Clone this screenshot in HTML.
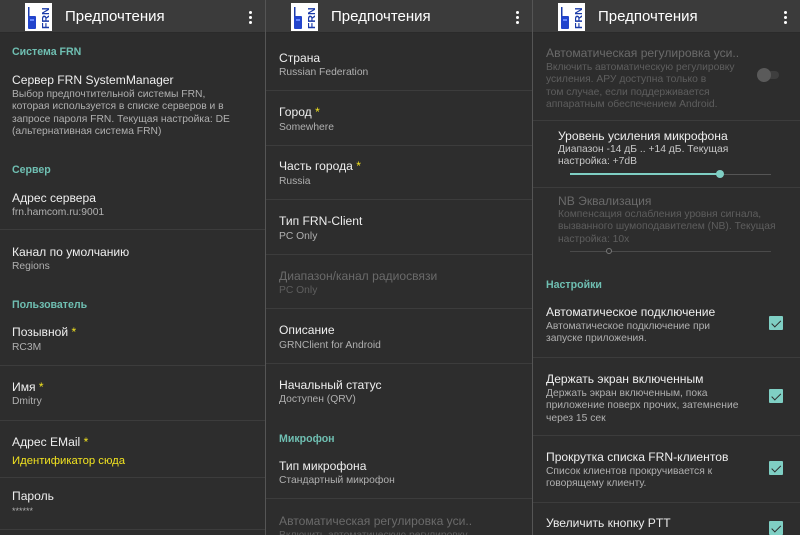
<!DOCTYPE html>
<html><head><meta charset="utf-8"><style>
*{margin:0;padding:0;box-sizing:border-box}
body{width:800px;height:535px;overflow:hidden;background:#2d2d2d;font-family:"Liberation Sans","DejaVu Sans",sans-serif;position:relative}
.p{position:absolute;top:0;height:535px;overflow:hidden;background:#2d2d2d}
.tb{position:absolute;left:0;top:0;right:0;height:33px;background:#3b3b3b;border-bottom:1px solid #2a2a2a}
.tt{position:absolute;left:65px;top:8px;color:#fff;font-size:15px}
.logo{position:absolute;left:25px;top:3px;width:27px;height:28px;background:#fff}
.menu{position:absolute;right:13px;top:11px;width:3px}
.menu i{display:block;width:3px;height:3px;background:#fff;border-radius:50%;margin-bottom:2px}
.t{position:absolute;color:#eee;font-size:12.1px;white-space:nowrap}
.s{position:absolute;color:#b0b0b0;font-size:10.3px;line-height:12.3px;white-space:nowrap}
.h{position:absolute;color:#6fbfb2;font-size:10.6px;font-weight:bold}
.d{color:#6a6a6a!important}
.ds{color:#5e5e5e!important}
.l{position:absolute;left:0;right:0;height:1px;background:#3c3c3c}
.y{color:#f2e320}
.cb{position:absolute;width:14px;height:14px;background:#7fcfc4;border-radius:1px}
.cb:after{content:"";position:absolute;left:4.5px;top:1.5px;width:3.5px;height:7.5px;border:solid #2d2d2d;border-width:0 1.6px 1.6px 0;transform:rotate(45deg)}
</style></head><body>

<!-- Panel 1 -->
<div class="p" style="left:0;width:265px">
<div class="tb"><div class="logo"><svg width="27" height="28" viewBox="0 0 27 28"><rect x="3" y="4" width="1.5" height="10" fill="#1a3aa8"/><rect x="3" y="13" width="8" height="13" rx="1" fill="#2244cc"/><rect x="5" y="16" width="4" height="2" fill="#6688ff"/><text x="0" y="0" transform="translate(24,26) rotate(-90)" font-family="Liberation Sans" font-weight="bold" font-size="10.5" fill="#1a3aa8">FRN</text></svg></div><div class="tt">Предпочтения</div><div class="menu"><i></i><i></i><i></i></div></div>
<div class="h" style="left:12px;top:46px">Система FRN</div>
<div class="t" style="left:12px;top:73px">Сервер FRN SystemManager</div>
<div class="s" style="left:12px;top:89px">Выбор предпочтительной системы FRN,<br>которая используется в списке серверов и в<br>запросе пароля FRN. Текущая настройка: DE<br>(альтернативная система FRN)</div>
<div class="h" style="left:12px;top:164px">Сервер</div>
<div class="t" style="left:12px;top:191px">Адрес сервера</div>
<div class="s" style="left:12px;top:207px">frn.hamcom.ru:9001</div>
<div class="l" style="top:229px"></div>
<div class="t" style="left:12px;top:245px">Канал по умолчанию</div>
<div class="s" style="left:12px;top:261px">Regions</div>
<div class="h" style="left:12px;top:299px">Пользователь</div>
<div class="t" style="left:12px;top:325px">Позывной <span class="y">*</span></div>
<div class="s" style="left:12px;top:342px">RC3M</div>
<div class="l" style="top:365px"></div>
<div class="t" style="left:12px;top:380px">Имя <span class="y">*</span></div>
<div class="s" style="left:12px;top:396px">Dmitry</div>
<div class="l" style="top:420px"></div>
<div class="t" style="left:12px;top:435px">Адрес EMail <span class="y">*</span></div>
<div class="t y" style="left:12px;top:455px;font-size:11.3px">Идентификатор сюда</div>
<div class="l" style="top:477px"></div>
<div class="t" style="left:12px;top:489px">Пароль</div>
<div class="s" style="left:12px;top:505px;font-size:9px">******</div>
<div class="l" style="top:529px"></div>
</div>
<div style="position:absolute;left:265px;top:0;width:1px;height:535px;background:#555"></div>

<!-- Panel 2 -->
<div class="p" style="left:266px;width:266px">
<div class="tb"><div class="logo"><svg width="27" height="28" viewBox="0 0 27 28"><rect x="3" y="4" width="1.5" height="10" fill="#1a3aa8"/><rect x="3" y="13" width="8" height="13" rx="1" fill="#2244cc"/><rect x="5" y="16" width="4" height="2" fill="#6688ff"/><text x="0" y="0" transform="translate(24,26) rotate(-90)" font-family="Liberation Sans" font-weight="bold" font-size="10.5" fill="#1a3aa8">FRN</text></svg></div><div class="tt">Предпочтения</div><div class="menu"><i></i><i></i><i></i></div></div>
<div class="t" style="left:13px;top:51px">Страна</div>
<div class="s" style="left:13px;top:67px">Russian Federation</div>
<div class="l" style="top:90px"></div>
<div class="t" style="left:13px;top:105px">Город <span class="y">*</span></div>
<div class="s" style="left:13px;top:122px">Somewhere</div>
<div class="l" style="top:145px"></div>
<div class="t" style="left:13px;top:159px">Часть города <span class="y">*</span></div>
<div class="s" style="left:13px;top:176px">Russia</div>
<div class="l" style="top:199px"></div>
<div class="t" style="left:13px;top:214px">Тип FRN-Client</div>
<div class="s" style="left:13px;top:231px">PC Only</div>
<div class="l" style="top:254px"></div>
<div class="t d" style="left:13px;top:269px">Диапазон/канал радиосвязи</div>
<div class="s ds" style="left:13px;top:285px">PC Only</div>
<div class="l" style="top:308px"></div>
<div class="t" style="left:13px;top:323px">Описание</div>
<div class="s" style="left:13px;top:340px">GRNClient for Android</div>
<div class="l" style="top:363px"></div>
<div class="t" style="left:13px;top:378px">Начальный статус</div>
<div class="s" style="left:13px;top:394px">Доступен (QRV)</div>
<div class="h" style="left:13px;top:433px">Микрофон</div>
<div class="t" style="left:13px;top:459px">Тип микрофона</div>
<div class="s" style="left:13px;top:475px">Стандартный микрофон</div>
<div class="l" style="top:498px"></div>
<div class="t d" style="left:13px;top:514px">Автоматическая регулировка уси..</div>
<div class="s ds" style="left:13px;top:530px">Включить автоматическую регулировку</div>
</div>
<div style="position:absolute;left:532px;top:0;width:1px;height:535px;background:#555"></div>

<!-- Panel 3 -->
<div class="p" style="left:533px;width:267px">
<div class="tb"><div class="logo"><svg width="27" height="28" viewBox="0 0 27 28"><rect x="3" y="4" width="1.5" height="10" fill="#1a3aa8"/><rect x="3" y="13" width="8" height="13" rx="1" fill="#2244cc"/><rect x="5" y="16" width="4" height="2" fill="#6688ff"/><text x="0" y="0" transform="translate(24,26) rotate(-90)" font-family="Liberation Sans" font-weight="bold" font-size="10.5" fill="#1a3aa8">FRN</text></svg></div><div class="tt">Предпочтения</div><div class="menu"><i></i><i></i><i></i></div></div>
<div class="t d" style="left:13px;top:46px">Автоматическая регулировка уси..</div>
<div class="s ds" style="left:13px;top:62px">Включить автоматическую регулировку<br>усиления. АРУ доступна только в<br>том случае, если поддерживается<br>аппаратным обеспечением Android.</div>
<div style="position:absolute;left:226px;top:71px;width:20px;height:8px;border-radius:4px;background:#3e3e3e"></div>
<div style="position:absolute;left:224px;top:68px;width:14px;height:14px;border-radius:50%;background:#5a5a5a"></div>
<div class="l" style="top:120px"></div>
<div class="t" style="left:25px;top:129px">Уровень усиления микрофона</div>
<div class="s" style="left:25px;top:144px;color:#c8c8c8">Диапазон -14 дБ .. +14 дБ. Текущая<br>настройка: +7dB</div>
<div style="position:absolute;left:37px;top:174px;width:201px;height:1px;background:#555"></div>
<div style="position:absolute;left:37px;top:173px;width:151px;height:2px;background:#7fcfc4"></div>
<div style="position:absolute;left:183px;top:170px;width:8px;height:8px;border-radius:50%;background:#7fcfc4"></div>
<div class="l" style="top:187px"></div>
<div class="t d" style="left:25px;top:194px">NB Эквализация</div>
<div class="s ds" style="left:25px;top:209px">Компенсация ослабления уровня сигнала,<br>вызванного шумоподавителем (NB). Текущая<br>настройка: 10x</div>
<div style="position:absolute;left:37px;top:251px;width:201px;height:1px;background:#4a4a4a"></div>
<div style="position:absolute;left:73px;top:248px;width:6px;height:6px;border-radius:50%;border:1px solid #777;background:#2d2d2d"></div>
<div class="h" style="left:13px;top:279px">Настройки</div>
<div class="t" style="left:13px;top:305px">Автоматическое подключение</div>
<div class="s" style="left:13px;top:321px">Автоматическое подключение при<br>запуске приложения.</div>
<div class="cb" style="left:236px;top:316px"></div>
<div class="l" style="top:357px"></div>
<div class="t" style="left:13px;top:372px">Держать экран включенным</div>
<div class="s" style="left:13px;top:388px">Держать экран включенным, пока<br>приложение поверх прочих, затемнение<br>через 15 сек</div>
<div class="cb" style="left:236px;top:389px"></div>
<div class="l" style="top:435px"></div>
<div class="t" style="left:13px;top:450px">Прокрутка списка FRN-клиентов</div>
<div class="s" style="left:13px;top:466px">Список клиентов прокручивается к<br>говорящему клиенту.</div>
<div class="cb" style="left:236px;top:461px"></div>
<div class="l" style="top:502px"></div>
<div class="t" style="left:13px;top:516px">Увеличить кнопку PTT</div>
<div class="cb" style="left:236px;top:521px"></div>
</div>
</body></html>
